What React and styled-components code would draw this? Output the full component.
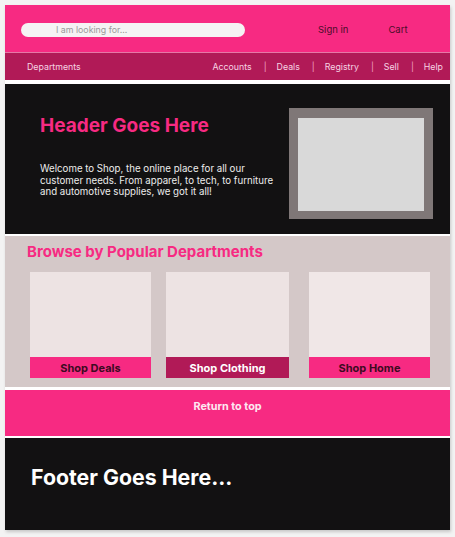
import React from "react";
import styled, { createGlobalStyle } from "styled-components";

const Global = createGlobalStyle`
  html, body { margin: 0; padding: 0; background: #f3f3f3; }
  body { font-family: Inter, "Noto Sans", Arial, sans-serif; }
  * { box-sizing: border-box; }
`;

const Page = styled.div`
  margin: 5px;
  width: 445px;
  background: #ffffff;
  box-shadow: 1px 2px 3px rgba(0, 0, 0, 0.18);
  display: flex;
  flex-direction: column;
`;

const TopBar = styled.header`
  height: 47px;
  background: #f72a82;
  display: flex;
  align-items: center;
  padding: 2px 0 0 16px;
`;

const Search = styled.div`
  width: 224px;
  height: 14px;
  border-radius: 7px;
  background: #f5f3f4;
  display: flex;
  align-items: center;
  padding-left: 35px;
  font-size: 8.8px;
  color: #9a9a9a;
`;

const TopLink = styled.span`
  font-size: 9.5px;
  color: #4a0d29;
  margin-left: ${(p) => p.$ml}px;
`;

const Nav = styled.nav`
  height: 28px;
  background: #b11a57;
  border-top: 1px solid #e678a6;
  display: flex;
  align-items: center;
  padding: 0 7px 0 22px;
  font-size: 8.8px;
  color: #f6d4e3;
`;

const NavList = styled.div`
  margin-left: auto;
  display: flex;
  align-items: center;
`;

const Sep = styled.span`
  color: #f3a5c6;
  margin: 0 10px 0 12px;
`;

const Hero = styled.section`
  margin-top: 4px;
  height: 150px;
  background: #121112;
  display: flex;
  padding: 24px 17px 15px 35px;
`;

const HeroText = styled.div`
  flex: 1;
  padding-top: 6px;
`;

const HeroTitle = styled.h1`
  margin: 0;
  font-size: 19px;
  font-weight: 700;
  color: #f72a82;
  line-height: 24px;
`;

const HeroP = styled.p`
  margin: 25px 0 0 0;
  width: 240px;
  font-size: 9.7px;
  line-height: 11.5px;
  color: #ececec;
`;

const Frame = styled.div`
  width: 144px;
  height: 111px;
  background: #7f7777;
  padding: 10px 9px 8px 9px;
`;

const FrameInner = styled.div`
  width: 100%;
  height: 100%;
  background: #d9d9d9;
`;

const Browse = styled.section`
  margin-top: 2px;
  height: 151px;
  background: #d4c8c8;
  padding: 6px 20px 9px 22px;
`;

const BrowseTitle = styled.h2`
  margin: 0;
  font-size: 15px;
  font-weight: 700;
  color: #f72a82;
  line-height: 20px;
`;

const Cards = styled.div`
  margin-top: 10px;
  padding-left: 3px;
  display: flex;
`;

const Card = styled.div`
  width: ${(p) => p.$w}px;
  margin-left: ${(p) => p.$ml}px;
  display: flex;
  flex-direction: column;
`;

const CardImg = styled.div`
  height: 85px;
  background: ${(p) => p.$bg};
`;

const CardBtn = styled.div`
  height: 21px;
  padding-top: 1px;
  background: ${(p) => (p.$dark ? "#b11a57" : "#f72a82")};
  color: ${(p) => (p.$dark ? "#ffffff" : "#3d0a21")};
  font-size: 11px;
  font-weight: 700;
  display: flex;
  align-items: center;
  justify-content: center;
`;

const ReturnBar = styled.section`
  margin-top: 3px;
  height: 46px;
  background: #f72a82;
  display: flex;
  justify-content: center;
  padding-top: 10px;
  font-size: 10.8px;
  font-weight: 700;
  color: #fde8f1;
`;

const Footer = styled.footer`
  margin-top: 2px;
  height: 92px;
  background: #121112;
  padding: 26px 26px 0 26px;
`;

const FooterTitle = styled.h2`
  margin: 0;
  font-size: 21.3px;
  font-weight: 700;
  color: #ffffff;
  line-height: 26px;
`;

const navItems = ["Accounts", "Deals", "Registry", "Sell", "Help"];

const cards = [
  { label: "Shop Deals", w: 121, ml: 0, bg: "#ede3e3" },
  { label: "Shop Clothing", w: 123, ml: 15, bg: "#ede3e3", dark: true },
  { label: "Shop Home", w: 121, ml: 20, bg: "#f0e7e7" },
];

export default function App() {
  return (
    <>
      <Global />
      <Page>
        <TopBar>
          <Search>I am looking for...</Search>
          <TopLink $ml={73}>Sign in</TopLink>
          <TopLink $ml={40}>Cart</TopLink>
        </TopBar>
        <Nav>
          <span>Departments</span>
          <NavList>
            {navItems.map((n, i) => (
              <React.Fragment key={n}>
                {i > 0 && <Sep>|</Sep>}
                <span>{n}</span>
              </React.Fragment>
            ))}
          </NavList>
        </Nav>
        <Hero>
          <HeroText>
            <HeroTitle>Header Goes Here</HeroTitle>
            <HeroP>
              Welcome to Shop, the online place for all our customer needs. From
              apparel, to tech, to furniture and automotive supplies, we got it
              all!
            </HeroP>
          </HeroText>
          <Frame>
            <FrameInner />
          </Frame>
        </Hero>
        <Browse>
          <BrowseTitle>Browse by Popular Departments</BrowseTitle>
          <Cards>
            {cards.map((c) => (
              <Card key={c.label} $w={c.w} $ml={c.ml}>
                <CardImg $bg={c.bg} />
                <CardBtn $dark={c.dark}>{c.label}</CardBtn>
              </Card>
            ))}
          </Cards>
        </Browse>
        <ReturnBar>Return to top</ReturnBar>
        <Footer>
          <FooterTitle>Footer Goes Here...</FooterTitle>
        </Footer>
      </Page>
    </>
  );
}
